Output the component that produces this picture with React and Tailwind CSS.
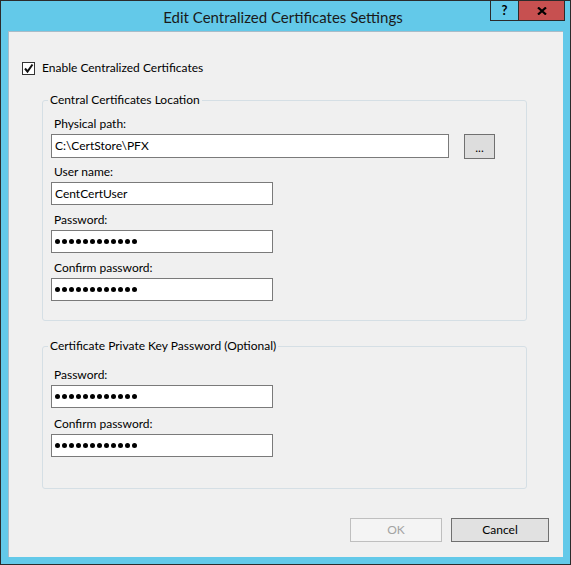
import React from 'react';

const Dots = () => (
    <div className="flex items-center gap-[2px]">
        {Array.from({ length: 12 }).map((_, i) => (
            <span key={i} className="w-[5px] h-[5px] rounded-full bg-black" />
        ))}
    </div>
);

const Field = ({ label, children, className = '' }) => (
    <div className={className}>
        <div className="h-[16px] leading-[16px] pl-[3px]">{label}</div>
        <div className="mt-[2px]">{children}</div>
    </div>
);

const TextBox = ({ value, width = 'w-[222px]', h = 'h-[23px]' }) => (
    <div className={`${width} ${h} bg-white border border-[#7a7a7a] flex items-center pl-[3px]`}>
        {value}
    </div>
);

const PassBox = () => (
    <div className="w-[222px] h-[23px] bg-white border border-[#7a7a7a] flex items-center pl-[3px]">
        <Dots />
    </div>
);

const App = () => {
    return (
        <div className="w-[571px] h-[565px] border border-[#2b2b2b] bg-[#63c9e9] flex flex-col font-['Lato',sans-serif] text-[12px] text-black">
            {/* title bar */}
            <div className="h-[30px] grid grid-cols-[1fr_auto_1fr] pr-[5px]">
                <div />
                <div className="text-[15px] leading-[30px] text-[#1a1a1a] pt-[1px]">Edit Centralized Certificates Settings</div>
                <div className="flex justify-end items-start">
                    <div className="flex mt-[-1px] h-[21px]">
                        <div className="w-[28px] h-full border-l border-b border-t border-[#2b2b2b] flex items-center justify-center font-bold text-[13px]">?</div>
                        <div className="w-[47px] h-full border border-[#2b2b2b] bg-[#c75050] flex items-center justify-center">
                            <svg width="10" height="8" viewBox="0 0 10 8">
                                <path d="M1 0.5 L9 7.5 M9 0.5 L1 7.5" stroke="#000" strokeWidth="2.2" />
                            </svg>
                        </div>
                    </div>
                </div>
            </div>

            {/* client area */}
            <div className="flex-1 mx-[7px] mb-[7px] bg-[#f0f0f0] border-t border-l border-[#a9bcc8] flex flex-col">
                <div className="h-[16px] mt-[28px] ml-[13px] flex items-center gap-[7px]">
                    <div className="w-[13px] h-[13px] border border-[#333] bg-white flex items-center justify-center">
                        <svg width="11" height="11" viewBox="0 0 11 11">
                            <path d="M2 5.5 L4.5 8.5 L9.5 1.5" fill="none" stroke="#111" strokeWidth="2" />
                        </svg>
                    </div>
                    <span>Enable Centralized Certificates</span>
                </div>

                <fieldset className="mt-[16px] ml-[33px] w-[485px] border border-[#d5dfe5] rounded-[3px] pl-[8px] pb-[19px]">
                    <legend className="ml-[-3px] px-[2px] h-[16px] leading-[16px]">Central Certificates Location</legend>
                    <div className="pt-[8px]">
                        <div className="h-[16px] leading-[16px] pl-[3px]">Physical path:</div>
                        <div className="mt-[2px] flex items-start gap-[15px]">
                            <TextBox value="C:\CertStore\PFX" width="w-[398px]" h="h-[24px]" />
                            <div className="w-[31px] h-[25px] bg-[#dddddd] border border-[#707070] flex items-center justify-center leading-none pt-[3px]">...</div>
                        </div>
                        <Field label="User name:" className="mt-[5px]">
                            <TextBox value="CentCertUser" />
                        </Field>
                        <Field label="Password:" className="mt-[7px]">
                            <PassBox />
                        </Field>
                        <Field label="Confirm password:" className="mt-[7px]">
                            <PassBox />
                        </Field>
                    </div>
                </fieldset>

                <fieldset className="mt-[17px] ml-[33px] w-[485px] border border-[#d5dfe5] rounded-[3px] pl-[8px] pb-[31px]">
                    <legend className="ml-[-3px] px-[2px] h-[16px] leading-[16px]">Certificate Private Key Password (Optional)</legend>
                    <div className="pt-[13px]">
                        <Field label="Password:">
                            <PassBox />
                        </Field>
                        <Field label="Confirm password:" className="mt-[8px]">
                            <PassBox />
                        </Field>
                    </div>
                </fieldset>

                <div className="mt-[29px] flex justify-end gap-[9px] pr-[14px]">
                    <div className="w-[92px] h-[24px] bg-[#f4f4f4] border border-[#bfbfbf] text-[#a3a3a3] flex items-center justify-center">OK</div>
                    <div className="w-[98px] h-[24px] bg-[#e1e1e1] border border-[#707070] flex items-center justify-center">Cancel</div>
                </div>
            </div>
        </div>
    );
};

export default App;
